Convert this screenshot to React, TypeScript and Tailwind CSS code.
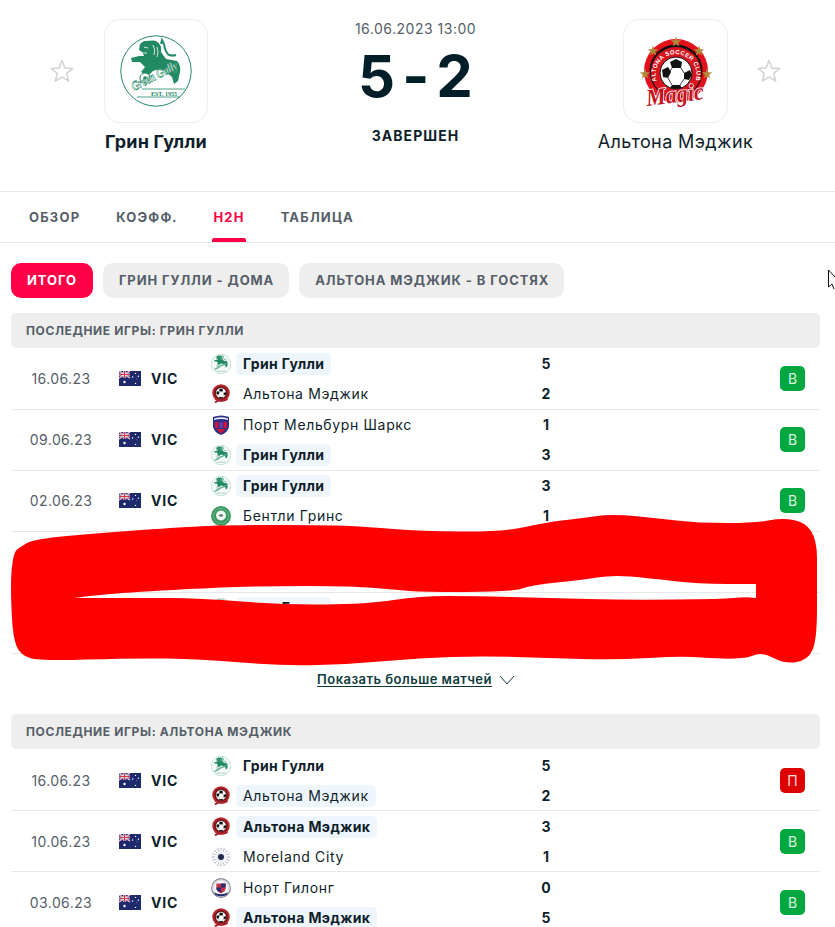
import React from "react";

const G = "#218a63";

function GreenGully({ size, small = false }: { size: number; small?: boolean }) {
  return (
    <svg width={size} height={size} viewBox="0 0 72 72" className="block shrink-0">
      <circle cx="36" cy="36" r="35.2" fill={small ? "#f4faf7" : "#fff"} stroke={small ? "#9fcdb9" : G} strokeWidth={small ? 2 : 1} />
      <path
        d="M24 6 L34 5.5 Q39 6.5 41 12 L41 17 L46 24 Q52 25 57 26 Q61 30 60 37 L58 46 L54 49 L52 42 L46 37 L39 34 L33 36 L28 41 L21 37 L25 32 L20 27 L12 27 L11 23 L19 21 L24 21 L22 17 L19 15 L20 9 Z"
        fill={G}
      />
      <path d="M41 9 L42 5 L44 9 Q45 17 49 20 Q53 21 56 20" fill="none" stroke={G} strokeWidth="2" />
      <path d="M24 12 L28 13 M21 18 L27 18 M33 10 Q36 15 34 20 M37 12 Q39 17 37 22" fill="none" stroke="#fff" strokeWidth="0.8" />
      <circle cx="25" cy="43" r="5" fill="#fff" stroke={G} strokeWidth="1" />
      <circle cx="25" cy="43" r="1.8" fill={G} />
      {small ? (
        <>
          <path d="M13 55 Q26 50 33 44 Q44 40 56 33" fill="none" stroke="#5fae8d" strokeWidth="5" />
          <path d="M20 62 H54" stroke="#9fcdb9" strokeWidth="3" />
        </>
      ) : (
        <>
          <path d="M22 54 H65" stroke={G} strokeWidth="0.8" />
          <path d="M17 62 H60" stroke={G} strokeWidth="0.8" />
          <text
            x="14"
            y="56"
            transform="rotate(-27 14 56)"
            fontFamily="Liberation Serif"
            fontStyle="italic"
            fontWeight="700"
            fontSize="13"
            fill="#fff"
            stroke={G}
            strokeWidth="0.6"
            textLength="50"
            lengthAdjust="spacingAndGlyphs"
          >
            Green Gully
          </text>
          <text x="31" y="60.5" fontFamily="Liberation Serif" fontWeight="700" fontSize="6" fill={G}>
            EST. 1955
          </text>
        </>
      )}
    </svg>
  );
}

function Star5({ x, y, r }: { x: number; y: number; r: number }) {
  const pts: string[] = [];
  for (let i = 0; i < 10; i++) {
    const rad = i % 2 === 0 ? r : r * 0.42;
    const a = -Math.PI / 2 + (i * Math.PI) / 5;
    pts.push(`${(x + rad * Math.cos(a)).toFixed(2)},${(y + rad * Math.sin(a)).toFixed(2)}`);
  }
  return <polygon points={pts.join(" ")} fill="#b08a3c" />;
}

function Ball() {
  return (
    <>
      <circle cx="40" cy="42" r="16" fill="#fff" stroke="#111" strokeWidth="1" />
      <polygon points="40,28 46,31 45,37 36,37 34,31" fill="#111" />
      <polygon points="26,39 32,36 35,41 32,47 27,46" fill="#111" />
      <polygon points="48,42 54,39 56,44 53,49 48,48" fill="#111" />
      <polygon points="36,54 44,54 46,57 40,58 34,57" fill="#111" />
      <path d="M36 37 L33 42 M45 37 L48 42 M32 47 L36 54 M48 48 L44 54" stroke="#111" strokeWidth="0.8" />
    </>
  );
}

function Altona({ size }: { size: number }) {
  return (
    <svg width={size} height={size} viewBox="0 0 80 80" className="block shrink-0">
      <circle cx="40" cy="40" r="32" fill="#e3101c" />
      <circle cx="40" cy="40" r="26.5" fill="#111" />
      <circle cx="40" cy="41" r="25" fill="#d8141f" />
      <path id="altonaArc" d="M20.5 50 A20.5 20.5 0 1 1 59.5 50" fill="none" />
      <text fontFamily="Liberation Sans" fontWeight="700" fontSize="6" fill="#fff">
        <textPath href="#altonaArc" textLength="76">
          ALTONA SOCCER CLUB
        </textPath>
      </text>
      <Ball />
      <Star5 x={40} y={11} r={5.5} />
      <Star5 x={17} y={20} r={5.5} />
      <Star5 x={63} y={20} r={5.5} />
      <Star5 x={9} y={43} r={5.5} />
      <Star5 x={71} y={43} r={5.5} />
      <text
        x="11"
        y="75"
        transform="rotate(-7 11 75)"
        fontFamily="Liberation Serif"
        fontStyle="italic"
        fontWeight="700"
        fontSize="24"
        fill="#c4121f"
        stroke="#fff"
        strokeWidth="1.6"
        paintOrder="stroke"
        textLength="58"
        lengthAdjust="spacingAndGlyphs"
      >
        Magic
      </text>
    </svg>
  );
}

function AltonaSmall() {
  return (
    <svg width="20" height="20" viewBox="0 0 80 80" className="block shrink-0">
      <circle cx="40" cy="36" r="35" fill="#b5262c" />
      <circle cx="40" cy="36" r="27" fill="#7a1418" />
      <g transform="translate(40 36) scale(1.3) translate(-40 -42)">
        <Ball />
      </g>
      <path d="M16 74 Q28 62 42 66 Q54 66 66 60" fill="none" stroke="#a8202a" strokeWidth="8" />
    </svg>
  );
}

function Sharks() {
  return (
    <svg width="20" height="20" viewBox="0 0 20 20" className="block shrink-0">
      <path d="M2 2 Q10 -1 18 2 L18 12 Q17 17 10 20 Q3 17 2 12 Z" fill="#2b2f86" />
      <path d="M3 3.4 Q10 1 17 3.4 L17 5 Q10 3 3 5 Z" fill="#e8e8f4" />
      <rect x="4" y="7" width="3.4" height="6" fill="#d3143a" />
      <rect x="8.4" y="7" width="3.4" height="6" fill="#6a3bb0" />
      <rect x="12.6" y="7" width="3.4" height="6" fill="#d3143a" />
      <path d="M5 14 H15 L10 18.5 Z" fill="#d3143a" />
    </svg>
  );
}

function Bentleigh() {
  return (
    <svg width="20" height="20" viewBox="0 0 20 20" className="block shrink-0">
      <circle cx="10" cy="10" r="10" fill="#3c9a62" />
      <circle cx="10" cy="10" r="7.6" fill="none" stroke="#8cc7a2" strokeWidth="1" strokeDasharray="1.4 1" />
      <circle cx="10" cy="9.5" r="5" fill="#eef7f1" />
      <path d="M7.5 9.5 Q10 6.5 12.5 9.5 Q10 12 7.5 9.5 Z" fill="#6b7a70" />
    </svg>
  );
}

function Moreland() {
  const rays = Array.from({ length: 16 }, (_, i) => (i * 360) / 16);
  return (
    <svg width="20" height="20" viewBox="0 0 20 20" className="block shrink-0">
      <circle cx="10" cy="10" r="9" fill="#fff" stroke="#e2e3e9" strokeWidth="0.8" />
      {rays.map((a) => (
        <line key={a} x1="10" y1="1" x2="10" y2="4.4" stroke="#b0b3c0" strokeWidth="0.9" transform={`rotate(${a} 10 10)`} />
      ))}
      <circle cx="10" cy="10" r="5" fill="#eceef4" />
      <circle cx="10" cy="10" r="3" fill="#20284f" />
    </svg>
  );
}

function NorthGeelong() {
  return (
    <svg width="20" height="20" viewBox="0 0 20 20" className="block shrink-0">
      <circle cx="10" cy="10" r="9.4" fill="#dfe1e8" stroke="#8a8d98" strokeWidth="1.1" />
      <circle cx="10" cy="10" r="6.8" fill="#fff" />
      <path d="M5.4 5.4 H14.6 V11 Q14 14 10 15.4 Q6 14 5.4 11 Z" fill="#c4304a" />
      <path d="M10 5.4 H14.6 V9.5 H10 Z M5.4 9.5 H10 V14.4 Q6 13.4 5.4 11 Z" fill="#27306f" />
      <path d="M3 14.5 Q10 18 17 14.5 L15.6 17 Q10 19.5 4.4 17 Z" fill="#27306f" />
    </svg>
  );
}

function Flag() {
  return (
    <svg width="22" height="15" viewBox="0 0 22 15" className="block shrink-0">
      <rect width="22" height="15" fill="#1f2a6e" />
      <rect width="11" height="7" fill="#2a3378" />
      <path d="M0 0 L11 7 M11 0 L0 7" stroke="#fff" strokeWidth="1.4" />
      <path d="M0 0 L11 7 M11 0 L0 7" stroke="#d8364c" strokeWidth="0.5" />
      <path d="M5.5 0 V7 M0 3.5 H11" stroke="#fff" strokeWidth="2.2" />
      <path d="M5.5 0 V7 M0 3.5 H11" stroke="#d8364c" strokeWidth="1.2" />
      <circle cx="5.5" cy="11" r="1.2" fill="#fff" />
      <circle cx="16.5" cy="2.4" r="0.7" fill="#fff" />
      <circle cx="16.5" cy="12.4" r="0.7" fill="#fff" />
      <circle cx="13.6" cy="6" r="0.7" fill="#fff" />
      <circle cx="19.4" cy="5.2" r="0.7" fill="#fff" />
      <circle cx="17.8" cy="7.8" r="0.4" fill="#fff" />
    </svg>
  );
}

function StarOutline() {
  return (
    <svg width="24" height="24" viewBox="0 0 24 24" className="block">
      <path
        d="M12 1.6 L14.9 9 L22.8 9.4 L16.7 14.4 L18.7 22.2 L12 17.9 L5.3 22.2 L7.3 14.4 L1.2 9.4 L9.1 9 Z"
        fill="none"
        stroke="#d2d2d2"
        strokeWidth="1.5"
        strokeLinejoin="round"
      />
    </svg>
  );
}

type Side = { logo: React.ReactNode; name: string; bold?: boolean; mark?: boolean; score: number };
type Row = { date: string; a: Side; b: Side; result: "В" | "П" };

const gg = () => <GreenGully size={20} small />;
const am = () => <AltonaSmall />;

const first: Row[] = [
  {
    date: "16.06.23",
    a: { logo: gg(), name: "Грин Гулли", bold: true, mark: true, score: 5 },
    b: { logo: am(), name: "Альтона Мэджик", score: 2 },
    result: "В",
  },
  {
    date: "09.06.23",
    a: { logo: <Sharks />, name: "Порт Мельбурн Шаркс", score: 1 },
    b: { logo: gg(), name: "Грин Гулли", bold: true, mark: true, score: 3 },
    result: "В",
  },
  {
    date: "02.06.23",
    a: { logo: gg(), name: "Грин Гулли", bold: true, mark: true, score: 3 },
    b: { logo: <Bentleigh />, name: "Бентли Гринс", score: 1 },
    result: "В",
  },
];

const second: Row[] = [
  {
    date: "16.06.23",
    a: { logo: gg(), name: "Грин Гулли", bold: true, score: 5 },
    b: { logo: am(), name: "Альтона Мэджик", mark: true, score: 2 },
    result: "П",
  },
  {
    date: "10.06.23",
    a: { logo: am(), name: "Альтона Мэджик", bold: true, mark: true, score: 3 },
    b: { logo: <Moreland />, name: "Moreland City", score: 1 },
    result: "В",
  },
  {
    date: "03.06.23",
    a: { logo: <NorthGeelong />, name: "Норт Гилонг", score: 0 },
    b: { logo: am(), name: "Альтона Мэджик", bold: true, mark: true, score: 5 },
    result: "В",
  },
];

function TeamLine({ s }: { s: Side }) {
  return (
    <div className="flex h-[22px] items-center">
      <div className="w-[25px] shrink-0">{s.logo}</div>
      <span
        className={`whitespace-nowrap rounded-[5px] px-[7px] text-[14px] leading-[22px] text-[#0f1e2b] ${
          s.mark ? "bg-[#eef5fc]" : ""
        } ${s.bold ? "font-bold tracking-[0.38px]" : "font-normal tracking-[0.65px]"}`}
      >
        {s.name}
      </span>
    </div>
  );
}

function MatchRow({ r, low = false }: { r: Row; low?: boolean }) {
  const top = low ? "pt-[5px]" : "pt-[4px]";
  return (
    <div className={`flex h-[61px] items-center border-b border-[#e8e8e8] ${low ? "" : "pb-[2px]"}`}>
      <div className="w-[100px] shrink-0 text-center text-[14px] tracking-[0.4px] text-[#555e68]">{r.date}</div>
      <div className="flex w-[100px] shrink-0 items-center pl-[8px]">
        <Flag />
        <span className="ml-[10px] text-[14px] font-bold tracking-[0.8px] text-[#0f1e2b]">VIC</span>
      </div>
      <div className={`flex w-[325px] shrink-0 flex-col gap-[8px] self-start ${top}`}>
        <TeamLine s={r.a} />
        <TeamLine s={r.b} />
      </div>
      <div className={`flex w-[20px] shrink-0 flex-col gap-[8px] self-start text-center text-[14px] font-bold text-[#0f1e2b] ${top}`}>
        <div className="h-[22px] leading-[22px]">{r.a.score}</div>
        <div className="h-[22px] leading-[22px]">{r.b.score}</div>
      </div>
      <div className="flex flex-1 justify-end pr-[15px]">
        <div
          className={`flex h-[25px] w-[25px] items-center justify-center rounded-[5px] text-[14px] text-white/85 ${
            r.result === "В" ? "bg-[#00a83f]" : "bg-[#dc0000]"
          }`}
        >
          {r.result}
        </div>
      </div>
    </div>
  );
}

function SectionHead({ children }: { children: React.ReactNode }) {
  return (
    <div className="mb-[1px] flex h-[35px] items-center rounded-[5px] bg-[#eeeeee] px-[15px] text-[12px] font-bold tracking-[0.62px] text-[#555e68]">
      {children}
    </div>
  );
}

const outer: [number, number][] = [
  [11, 573], [14, 552], [20, 547], [34, 539], [100, 533], [183, 527], [233, 525], [333, 525], [367, 527], [420, 531],
  [502, 532], [548, 522], [575, 519], [612, 514], [655, 518], [698, 523], [755, 523], [782, 518], [805, 522], [817, 540],
  [817, 577], [817, 640], [808, 660], [785, 664], [762, 652], [748, 658], [722, 659], [682, 656], [615, 660], [548, 658],
  [482, 656], [420, 658], [353, 664], [283, 666], [200, 659], [133, 658], [40, 661], [20, 655], [13, 637], [11, 600],
];
const hole: [number, number][] = [
  [73, 598], [73, 598], [117, 593], [207, 588], [267, 586], [350, 586], [400, 590], [420, 592], [512, 592], [532, 585],
  [582, 580], [612, 575], [648, 578], [698, 584], [756, 584], [756, 584], [756, 584], [756, 598], [756, 598], [756, 598],
  [745, 597], [722, 599], [628, 600], [548, 598], [475, 596], [420, 596], [367, 604], [283, 605], [200, 598], [140, 598],
];

function smooth(p: [number, number][]) {
  const mid = (a: [number, number], b: [number, number]) => [(a[0] + b[0]) / 2, (a[1] + b[1]) / 2];
  const n = p.length;
  const s = mid(p[n - 1], p[0]);
  let d = `M${s[0]} ${s[1]}`;
  for (let i = 0; i < n; i++) {
    const m = mid(p[i], p[(i + 1) % n]);
    d += ` Q${p[i][0]} ${p[i][1]} ${m[0]} ${m[1]}`;
  }
  return d + " Z";
}

export default function App() {
  return (
    <div className="relative h-[927px] w-[835px] overflow-hidden bg-white font-[Inter,sans-serif]">
      {/* match header */}
      <div className="flex h-[192px] items-start border-b border-[#e8e8e8] pl-[50px] pt-[19px]">
        <div className="mt-[40px] w-[24px] shrink-0">
          <StarOutline />
        </div>
        <div className="ml-[30px] flex w-[104px] shrink-0 flex-col items-center">
          <div className="flex h-[104px] w-[104px] items-center justify-center rounded-[16px] border border-[#eeeeee]">
            <GreenGully size={72} />
          </div>
          <div className="mt-[8px] whitespace-nowrap text-[18px] font-bold leading-[22px] tracking-[0.2px] text-[#0f1e2b]">Грин Гулли</div>
        </div>
        <div className="flex flex-1 flex-col items-center">
          <div className="text-[14px] leading-[20px] tracking-[0.5px] text-[#555e68]">16.06.2023 13:00</div>
          <div className="mt-[7px] flex h-[60px] items-center gap-[7px] text-[58px] font-bold leading-[60px] text-[#001e28]">
            <span>5</span>
            <span>-</span>
            <span>2</span>
          </div>
          <div className="mt-[20px] text-[14px] font-bold leading-[20px] tracking-[1.05px] text-[#0f1e2b]">ЗАВЕРШЕН</div>
        </div>
        <div className="flex w-[105px] shrink-0 flex-col items-center">
          <div className="flex h-[104px] w-[105px] items-center justify-center rounded-[16px] border border-[#eeeeee]">
            <Altona size={80} />
          </div>
          <div className="mt-[8px] whitespace-nowrap text-[18px] font-normal leading-[22px] tracking-[0.4px] text-[#0f1e2b]">
            Альтона Мэджик
          </div>
        </div>
        <div className="ml-[29px] mr-[54px] mt-[40px] w-[24px] shrink-0">
          <StarOutline />
        </div>
      </div>

      {/* tabs */}
      <div className="flex h-[51px] items-stretch gap-[36px] border-b border-[#e8e8e8] pl-[29px] text-[13px] font-bold tracking-[1.2px]">
        <div className="flex items-center pt-[2px] text-[#555e68]">ОБЗОР</div>
        <div className="flex items-center pt-[2px] text-[#555e68]">КОЭФФ.</div>
        <div className="relative flex items-center pt-[2px] text-[#ff0046]">
          Н2Н
          <div className="absolute bottom-0 left-[-1px] right-[-1px] h-[4px] rounded-t-[2px] bg-[#ff0046]" />
        </div>
        <div className="flex items-center pt-[2px] text-[#555e68]">ТАБЛИЦА</div>
      </div>

      {/* filters */}
      <div className="flex gap-[10px] px-[11px] pt-[20px] text-[13px] font-bold tracking-[0.9px]">
        <div className="flex h-[35px] items-center rounded-[10px] bg-[#ff0046] px-[16px] text-white">ИТОГО</div>
        <div className="flex h-[35px] items-center rounded-[10px] bg-[#eeeeee] pl-[16px] pr-[15px] text-[#555e68]">ГРИН ГУЛЛИ - ДОМА</div>
        <div className="flex h-[35px] items-center rounded-[10px] bg-[#eeeeee] pl-[16px] pr-[15px] text-[#555e68]">АЛЬТОНА МЭДЖИК - В ГОСТЯХ</div>
      </div>

      {/* first table */}
      <div className="mx-[11px] mt-[15px] w-[809px]">
        <SectionHead>ПОСЛЕДНИЕ ИГРЫ: ГРИН ГУЛЛИ</SectionHead>
        {first.map((r) => (
          <MatchRow key={r.date} r={r} />
        ))}
        <div className="h-[61px] border-b border-[#e8e8e8]" />
        <div className="h-[61px] border-b border-[#e8e8e8] pt-[4px]">
          <div className="ml-[200px]">
            <TeamLine s={{ logo: gg(), name: "Грин Гулли", bold: true, mark: true, score: 0 }} />
          </div>
        </div>
        <div className="flex h-[50px] items-center justify-center pt-[2px]">
          <span className="ml-[1px] text-[13px] font-semibold tracking-[0.47px] text-[#0f3b3f] underline underline-offset-2">
            Показать больше матчей
          </span>
          <svg width="16" height="10" viewBox="0 0 16 10" className="ml-[7px]">
            <path d="M1 1 L8 9 L15 1" fill="none" stroke="#0f3b3f" strokeWidth="1" />
          </svg>
        </div>
      </div>

      {/* second table */}
      <div className="mx-[11px] mt-[10px] w-[809px]">
        <SectionHead>ПОСЛЕДНИЕ ИГРЫ: АЛЬТОНА МЭДЖИК</SectionHead>
        {second.map((r) => (
          <MatchRow key={r.date} r={r} low />
        ))}
      </div>

      {/* red scribble drawn over the page */}
      <svg width="835" height="927" viewBox="0 0 835 927" className="pointer-events-none absolute left-0 top-0">
        <path d={`${smooth(outer)} ${smooth(hole)}`} fill="#ff0000" fillRule="evenodd" />
      </svg>

      {/* mouse cursor */}
      <svg width="8" height="22" viewBox="0 0 8 22" className="absolute left-[827px] top-[269px]">
        <path d="M1.5 1 V18 L5 15 L7 20 M1.5 1 L8 8" fill="#fff" stroke="#111" strokeWidth="1" />
      </svg>
    </div>
  );
}
